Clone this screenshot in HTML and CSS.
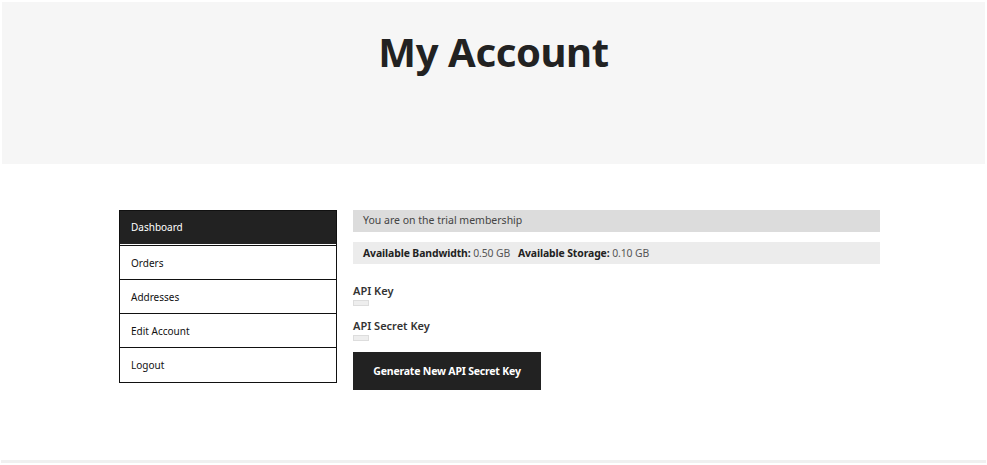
FILE: index.html
```html
<!DOCTYPE html>
<html>
<head>
<meta charset="utf-8">
<title>My Account</title>
<link rel="stylesheet" href="styles.css">
</head>
<body>
<div class="page">
  <header class="hero">
    <h1 class="hero-title">My Account</h1>
  </header>
  <main class="account">
    <nav class="account-nav">
      <ul class="nav-list">
        <li class="nav-item is-active"><a href="#">Dashboard</a></li>
        <li class="nav-item"><a href="#">Orders</a></li>
        <li class="nav-item"><a href="#">Addresses</a></li>
        <li class="nav-item"><a href="#">Edit Account</a></li>
        <li class="nav-item"><a href="#">Logout</a></li>
      </ul>
    </nav>
    <section class="account-content">
      <div class="notice">You are on the trial membership</div>
      <div class="stats"><b>Available Bandwidth:</b> 0.50 GB &nbsp; <b>Available Storage:</b> 0.10 GB</div>
      <div class="field">
        <div class="field-label">API Key</div>
        <div class="field-box"></div>
      </div>
      <div class="field">
        <div class="field-label">API Secret Key</div>
        <div class="field-box"></div>
      </div>
      <button class="btn">Generate New API Secret Key</button>
    </section>
  </main>
  <footer class="foot"></footer>
</div>
</body>
</html>
```
FILE: styles.css
```css
* { box-sizing: border-box; }
html, body { margin: 0; padding: 0; background: #fff; }
body {
  font-family: "Noto Sans", "DejaVu Sans", sans-serif;
  color: #333;
  width: 987px;
  height: 465px;
  overflow: hidden;
}
.page {
  padding: 2px 2px 0 1px;
  display: flex;
  flex-direction: column;
}
.hero {
  background: #f6f6f6;
  height: 162px;
  margin-left: 1px;
  display: flex;
  justify-content: center;
}
.hero-title {
  margin: 0;
  padding-top: 23px;
  font-size: 40px;
  line-height: 54px;
  font-weight: 700;
  color: #222;
  letter-spacing: -0.4px;
}
.account {
  display: flex;
  gap: 16px;
  margin: 46px 0 0 118px;
  height: 250px;
}
.account-nav { width: 218px; flex: none; }
.nav-list {
  list-style: none;
  margin: 0;
  padding: 0;
  border: 1px solid #111;
}
.nav-item {
  border-top: 1px solid #111;
  height: 34px;
}
.nav-item:first-child { border-top: none; }
.nav-item:last-child { height: 35px; }
.nav-item a {
  display: block;
  height: 100%;
  padding-left: 11px;
  line-height: 34px;
  font-size: 10px;
  color: #111;
  text-decoration: none;
}
.nav-item.is-active a {
  background: #222;
  color: #fff;
  height: 33px;
  line-height: 33px;
}
.account-content {
  width: 527px;
  flex: none;
}
.notice {
  background: #dcdcdc;
  height: 22px;
  line-height: 21px;
  padding-left: 10px;
  font-size: 10.5px;
  color: #444;
}
.stats {
  margin-top: 10px;
  background: #ececec;
  height: 22px;
  line-height: 22px;
  padding-left: 10px;
  font-size: 10.4px;
  color: #555;
  letter-spacing: -0.1px;
}
.stats b { color: #222; font-weight: 700; }
.field { margin-top: 20px; }
.field + .field { margin-top: 13px; }
.field-label {
  font-size: 11px;
  line-height: 14px;
  font-weight: 600;
  color: #333;
}
.field-box {
  width: 16px;
  height: 6px;
  margin-top: 2px;
  background: #eee;
  border: 1px solid #ddd;
}
.btn {
  display: block;
  margin-top: 11px;
  width: 188px;
  height: 38px;
  border: none;
  background: #222;
  color: #fff;
  font-family: "Noto Sans", "DejaVu Sans", sans-serif;
  font-size: 10.5px;
  font-weight: 700;
  letter-spacing: -0.2px;
  padding: 0;
}
.foot {
  height: 3px;
  background: #f0f0f0;
  width: 985px;
}
```
